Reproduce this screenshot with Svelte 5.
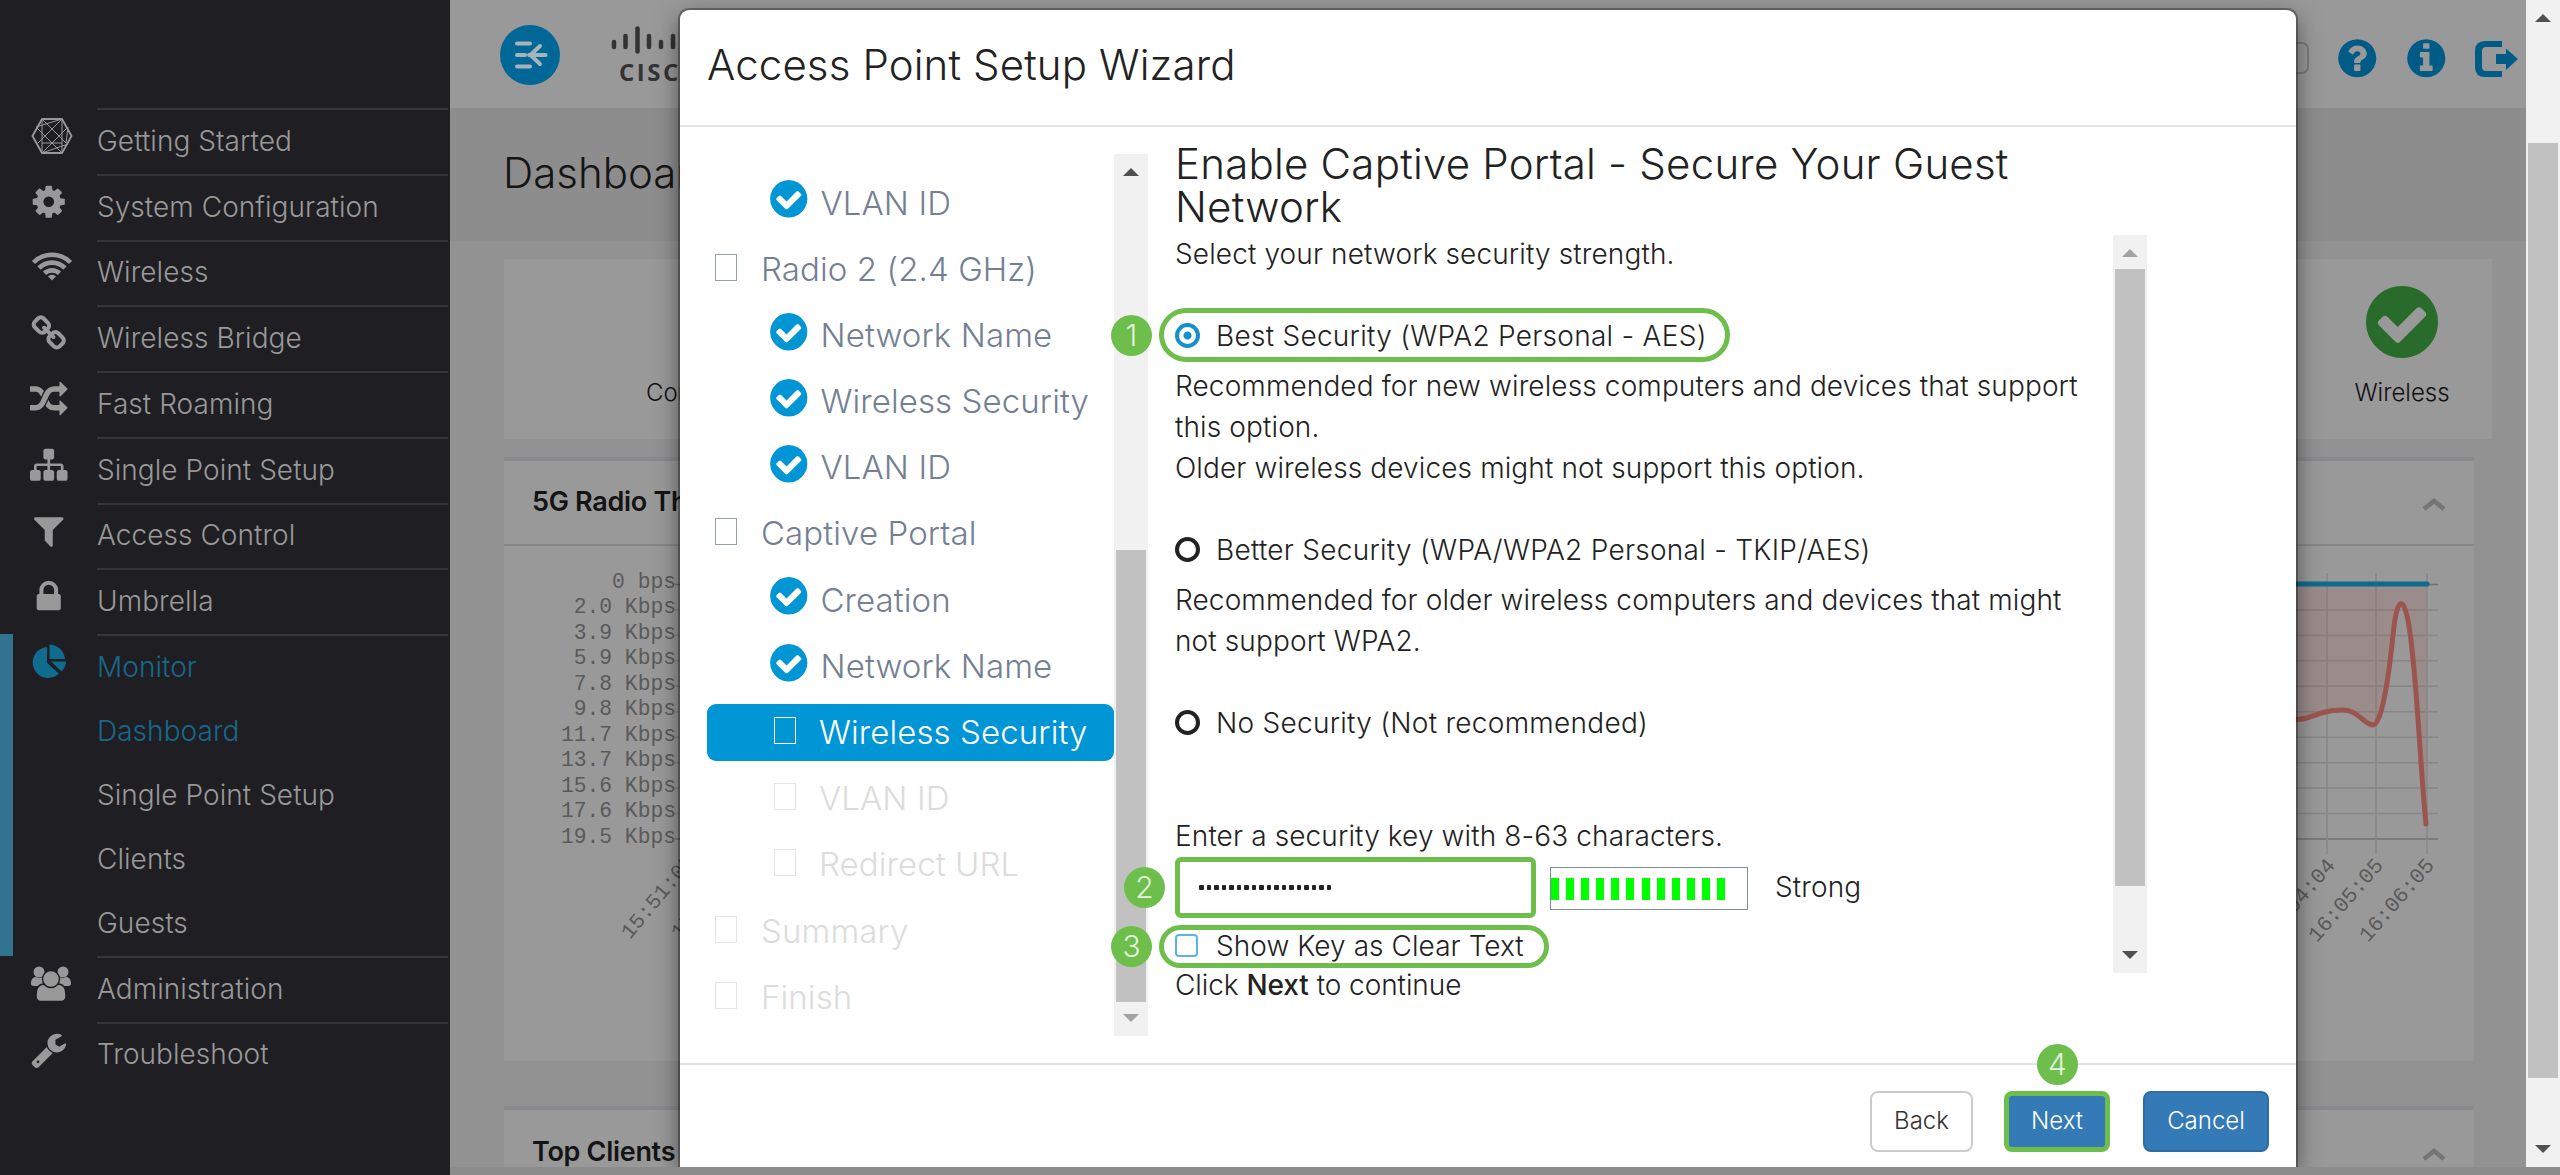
<script lang="ts">
	interface MenuItem {
		label: string;
		icon: string;
		children?: string[];
	}

	interface Step {
		label: string;
		state: 'done' | 'section' | 'active' | 'pending';
		nested: boolean;
	}

	const menu: MenuItem[] = [
		{ label: 'Getting Started', icon: 'mesh' },
		{ label: 'System Configuration', icon: 'cog' },
		{ label: 'Wireless', icon: 'wifi' },
		{ label: 'Wireless Bridge', icon: 'link' },
		{ label: 'Fast Roaming', icon: 'random' },
		{ label: 'Single Point Setup', icon: 'sitemap' },
		{ label: 'Access Control', icon: 'filter' },
		{ label: 'Umbrella', icon: 'lock' },
		{ label: 'Monitor', icon: 'pie', children: ['Dashboard', 'Single Point Setup', 'Clients', 'Guests'] },
		{ label: 'Administration', icon: 'users' },
		{ label: 'Troubleshoot', icon: 'wrench' }
	];

	const steps: Step[] = [
		{ label: 'VLAN ID', state: 'done', nested: true },
		{ label: 'Radio 2 (2.4 GHz)', state: 'section', nested: false },
		{ label: 'Network Name', state: 'done', nested: true },
		{ label: 'Wireless Security', state: 'done', nested: true },
		{ label: 'VLAN ID', state: 'done', nested: true },
		{ label: 'Captive Portal', state: 'section', nested: false },
		{ label: 'Creation', state: 'done', nested: true },
		{ label: 'Network Name', state: 'done', nested: true },
		{ label: 'Wireless Security', state: 'active', nested: true },
		{ label: 'VLAN ID', state: 'pending', nested: true },
		{ label: 'Redirect URL', state: 'pending', nested: true },
		{ label: 'Summary', state: 'pending', nested: false },
		{ label: 'Finish', state: 'pending', nested: false }
	];

	// 1792 x 1792 glyphs
	const glyphs: Record<string, string> = {
		cog: 'M1152 896q0-106-75-181t-181-75-181 75-75 181 75 181 181 75 181-75 75-181zm512-109v222q0 12-8 23t-20 13l-185 28q-19 54-39 91 35 50 107 138 10 12 10 25t-9 23q-27 37-99 108t-94 71q-12 0-26-9l-138-108q-44 23-91 38-16 136-29 186-7 28-36 28h-222q-14 0-24.5-8.5t-11.5-21.5l-28-184q-49-16-90-37l-141 107q-10 9-25 9-14 0-25-11-126-114-165-168-7-10-7-23 0-12 8-23 15-21 51-66.5t54-70.5q-27-50-41-99l-183-27q-13-2-21-12.5t-8-23.5v-222q0-12 8-23t19-13l186-28q14-46 39-92-40-57-107-138-10-12-10-24 0-10 9-23 26-36 98.5-107.5t94.5-71.5q13 0 26 10l138 107q44-23 91-38 16-136 29-186 7-28 36-28h222q14 0 24.5 8.5t11.5 21.5l28 184q49 16 90 37l142-107q9-9 24-9 13 0 25 10 129 119 165 170 7 8 7 22 0 12-8 23-15 21-51 66.5t-54 70.5q26 50 41 98l183 28q13 2 21 12.5t8 23.5z',
		link: 'M1520 1216q0-40-28-68l-208-208q-28-28-68-28-42 0-72 32 3 3 19 18.5t21.5 21.5 15 19 13 25.5 3.5 27.5q0 40-28 68t-68 28q-15 0-27.5-3.5t-25.5-13-19-15-21.5-21.5-18.5-19q-33 31-33 73 0 40 28 68l206 207q27 27 68 27 40 0 68-26l147-146q28-28 28-67zm-703-705q0-40-28-68l-206-207q-28-28-68-28-39 0-68 27l-147 146q-28 28-28 67 0 40 28 68l208 208q27 27 68 27 42 0 72-31-3-3-19-18.5t-21.5-21.5-15-19-13-25.5-3.5-27.5q0-40 28-68t68-28q15 0 27.5 3.5t25.5 13 19 15 21.5 21.5 18.5 19q33-31 33-73zm895 705q0 120-85 203l-147 146q-83 83-203 83-121 0-204-85l-206-207q-83-83-83-203 0-123 88-209l-88-88q-86 88-208 88-120 0-204-84l-208-208q-84-84-84-204t85-203l147-146q83-83 203-83 121 0 204 85l206 207q83 83 83 203 0 123-88 209l88 88q86-88 208-88 120 0 204 84l208 208q84 84 84 204z',
		random: 'M666 481q-60 92-137 273-22-45-37-72.5t-40.5-63.5-51-56.5-63-35-81.5-14.5h-224q-14 0-23-9t-9-23v-192q0-14 9-23t23-9h224q250 0 410 225zm1126 799q0 14-9 23l-320 320q-9 9-23 9-13 0-22.5-9.5t-9.5-22.5v-192q-32 0-85 .5t-81 1-73-1-71-5-64-10.5-63-18.5-58-28.5-59-40-55-53.5-56-69.5q59-93 136-273 22 45 37 72.5t40.5 63.5 51 56.5 63 35 81.5 14.5h256v-192q0-14 9-23t23-9q12 0 24 10l319 319q9 9 9 23zm0-896q0 14-9 23l-320 320q-9 9-23 9-13 0-22.5-9.5t-9.5-22.5v-192h-256q-48 0-87 15t-69 45-51 61.5-45 77.5q-32 62-78 171-29 66-49.5 111t-54 105-64 100-74 83-90 68.5-106.5 42-128 16.5h-224q-14 0-23-9t-9-23v-192q0-14 9-23t23-9h224q48 0 87-15t69-45 51-61.5 45-77.5q32-62 78-171 29-66 49.5-111t54-105 64-100 74-83 90-68.5 106.5-42 128-16.5h256v-192q0-14 9-23t23-9q12 0 24 10l319 319q9 9 9 23z',
		sitemap: 'M1792 1248v320q0 40-28 68t-68 28h-320q-40 0-68-28t-28-68v-320q0-40 28-68t68-28h96v-192h-512v192h96q40 0 68 28t28 68v320q0 40-28 68t-68 28h-320q-40 0-68-28t-28-68v-320q0-40 28-68t68-28h96v-192h-512v192h96q40 0 68 28t28 68v320q0 40-28 68t-68 28h-320q-40 0-68-28t-28-68v-320q0-40 28-68t68-28h96v-192q0-52 38-90t90-38h512v-192h-96q-40 0-68-28t-28-68v-320q0-40 28-68t68-28h320q40 0 68 28t28 68v320q0 40-28 68t-68 28h-96v192h512q52 0 90 38t38 90v192h96q40 0 68 28t28 68z',
		filter: 'M1595 295q17 41-14 70l-493 493v742q0 42-39 59-13 5-25 5-27 0-45-19l-256-256q-19-19-19-45v-486l-493-493q-31-29-14-70 17-39 59-39h1280q42 0 59 39z',
		lock: 'M640 768h512v-192q0-106-75-181t-181-75-181 75-75 181v192zm832 96v576q0 40-28 68t-68 28h-960q-40 0-68-28t-28-68v-576q0-40 28-68t68-28h32v-192q0-184 132-316t316-132 316 132 132 316v192h32q40 0 68 28t28 68z',
		wrench: 'M448 1472q0-26-19-45t-45-19-45 19-19 45 19 45 45 19 45-19 19-45zm644-420l-682 682q-37 37-90 37-52 0-91-37l-106-108q-38-36-38-90 0-53 38-91l681-681q39 98 114.5 173.5t173.5 114.5zm634-435q0 39-23 106-47 134-164.5 217.5t-258.5 83.5q-185 0-316.5-131.5t-131.5-316.5 131.5-316.5 316.5-131.5q58 0 121.5 16.5t107.5 46.5q16 11 16 28t-16 28l-293 169v224l193 107q5-3 79-48.5t135.5-81 70.5-35.5q15 0 23.5 10t8.5 25z'
	};

	const disc = 'zm384 192q0 209-103 385.5t-279.5 279.5-385.5 103-385.5-103-279.5-279.5-103-385.5 103-385.5 279.5-279.5 385.5-103 385.5 103 279.5 279.5 103 385.5z';
	const question =
		'M1024 1376v-192q0-14-9-23t-23-9h-192q-14 0-23 9t-9 23v192q0 14 9 23t23 9h192q14 0 23-9t9-23zm256-672q0-88-55.5-163t-138.5-116-170-41q-243 0-371 213-15 24 8 42l132 100q7 6 19 6 16 0 25-12 53-68 86-92 34-24 86-24 48 0 85.5 26t37.5 59q0 38-20 61t-68 45q-63 28-115.5 86.5t-52.5 125.5v36q0 14 9 23t23 9h192q14 0 23-9t9-23q0-19 21.5-49.5t54.5-49.5q32-18 49-28.5t46-35 44.5-48 28-60.5 12.5-81' +
		disc;
	const info =
		'M1152 1376v-160q0-14-9-23t-23-9h-96v-512q0-14-9-23t-23-9h-320q-14 0-23 9t-9 23v160q0 14 9 23t23 9h96v320h-96q-14 0-23 9t-9 23v160q0 14 9 23t23 9h448q14 0 23-9t9-23zm-128-896v-160q0-14-9-23t-23-9h-192q-14 0-23 9t-9 23v160q0 14 9 23t23 9h192q14 0 23-9t9-23zm640 416q0 209-103 385.5t-279.5 279.5-385.5 103-385.5-103-279.5-279.5-103-385.5 103-385.5 279.5-279.5 385.5-103 385.5 103 279.5 279.5 103 385.5z';
	const check =
		'M1412 734q0-28-18-46l-91-90q-19-19-45-19t-45 19l-408 407-226-226q-19-19-45-19t-45 19l-91 90q-18 18-18 46 0 27 18 45l362 362q19 19 45 19 27 0 46-19l543-543q18-18 18-45zm252 162q0 209-103 385.5t-279.5 279.5-385.5 103-385.5-103-279.5-279.5-103-385.5 103-385.5 279.5-279.5 385.5-103 385.5 103 279.5 279.5 103 385.5z';

	const rates = ['0 bps', '2.0 Kbps', '3.9 Kbps', '5.9 Kbps', '7.8 Kbps', '9.8 Kbps', '11.7 Kbps', '13.7 Kbps', '15.6 Kbps', '17.6 Kbps', '19.5 Kbps'];
	const gridY = rates.map((_, i) => 38.5 + i * 25.45);
	const bars = Array.from({ length: 12 });

	let strength = $state('best');
	let key = $state('guest-network-pass');
	let showKey = $state(false);
</script>

{#snippet scrollArrow(down: boolean, muted: boolean)}
	<svg class="arrow" class:muted width="16" height="8" viewBox="0 0 16 8">
		<path d={down ? 'M0 0h16L8 8z' : 'M0 8h16L8 0z'} />
	</svg>
{/snippet}

{#snippet menuIcon(name: string)}
	{#if name === 'mesh'}
		<svg class="icon mesh" width="42" height="38" viewBox="0 0 42 38">
			<path class="outline" d="M11 2h20l9.500 17L31 36H11L1.500 19z" />
			<path d="M11 2v34M31 2v34M11 26h20M11 2l24 24M31 2L7 26M11 36L37 10M31 36L5 10M5 10L31 2M11 36l26-9M37 10l-2 16" />
		</svg>
	{:else if name === 'wifi'}
		<svg class="icon wifi" width="42" height="30" viewBox="0 0 42 30">
			<path d="M2.500 11.500a26 26 0 0 1 37 0M8 17a18.500 18.500 0 0 1 26 0M13.500 22.300a11 11 0 0 1 15 0" />
			<path class="dot" d="M17 25.200a6 6 0 0 1 8 0L21 29.500z" />
		</svg>
	{:else if name === 'pie'}
		<svg class="icon" width="37" height="36" viewBox="0 0 37 36">
			<path d="M16 3v16l12 10.500A15.500 15.500 0 1 1 16 3z" />
			<path d="M18.500 .5A16 16 0 0 1 34 15H18.500zM20 17.500h15a15 15 0 0 1-4.500 10z" />
		</svg>
	{:else if name === 'users'}
		<svg class="icon users" width="42" height="36" viewBox="0 0 42 36">
			<circle cx="9" cy="6" r="5.500" />
			<circle cx="33" cy="6" r="5.500" />
			<path d="M1 18c0-5 2-7 5-7 2 1.500 5 1.500 6 0l2 9H4c-2 0-3-1-3-2zM41 18c0-5-2-7-5-7-2 1.500-5 1.500-6 0l-2 9h10c2 0 3-1 3-2z" />
			<path class="cut" d="M6 30c0-8 3-12 8-12 4 4 10 4 14 0 5 0 8 4 8 12 0 3-2 5.500-5 5.500H11c-3 0-5-2.500-5-5.500z" />
			<circle class="cut" cx="21" cy="13" r="8.500" />
		</svg>
	{:else}
		<svg class="icon" width="37.500" height="37.500" viewBox="0 0 1792 1792"><path d={glyphs[name]} /></svg>
	{/if}
{/snippet}

<div class="app">
	<aside class="sidebar">
		<ul>
			{#each menu as item (item.label)}
				<li class:current={item.children}>
					<div class="menu-row">
						<span class="menu-icon">{@render menuIcon(item.icon)}</span>
						<span class="menu-label">{item.label}</span>
					</div>
					{#if item.children}
						{#each item.children as child, i (child)}
							<div class="sub-row" class:selected={i === 0}>{child}</div>
						{/each}
					{/if}
				</li>
			{/each}
		</ul>
	</aside>

	<main class="page">
		<header class="topbar">
			<svg class="toggle" width="60" height="60" viewBox="0 0 60 60">
				<circle cx="30" cy="30" r="30" />
				<path d="M17 18.500h13M17 30h8M17 41.500h13M29 30h16.500M40 21l-9.500 9 9.500 9" />
			</svg>
			<div class="brand">
				<svg width="110" height="28" viewBox="0 0 110 28">
					<path d="M3 16v5M14.500 10v11M26.500 2.500v23M38 10v11M50 16v5M62 10v11M74 2.500v23M86 10v11M98 16v5" />
				</svg>
				<span>CISCO</span>
			</div>
			<div class="language"></div>
			<svg class="tool" width="44.500" height="44.500" viewBox="0 0 1792 1792"><path d={question} /></svg>
			<svg class="tool second" width="44.500" height="44.500" viewBox="0 0 1792 1792"><path d={info} /></svg>
			<svg class="tool logout" width="43" height="38" viewBox="0 0 43 38">
				<path d="M27 1v6H11q-4 0-4 4v16q0 4 4 4h16v6H10Q0 37 0 27V11Q0 1 10 1z" />
				<path d="M21 14h10V8.500L43 19 31 30v-6H21z" />
			</svg>
		</header>

		<h1>Dashboard</h1>

		<section class="status">
			<span class="status-item first">Connectivity</span>
			<div class="status-item last">
				<svg width="84" height="84" viewBox="0 0 1792 1792"><path d={check} /></svg>
				<span>Wireless</span>
			</div>
		</section>

		<section class="panel throughput">
			<div class="panel-head">
				<span>5G Radio Throughput</span>
				<svg width="24" height="13" viewBox="0 0 24 13"><path d="M2 11l10-8 10 8" /></svg>
			</div>
			<div class="panel-body">
				<ul class="rates">
					{#each rates as rate}
						<li>{rate}</li>
					{/each}
				</ul>
				<svg class="chart" width="1762" height="515" viewBox="0 0 1762 515">
					{#each gridY as y, i}
						<path class="grid" class:axis={i === 0 || i === 10} d="M-1 {y}H1762" />
					{/each}
					<path class="grid" d="M1651 27V308M1700 27V308M1751 27V308" />
					<path class="fill" d="M1497 38V171H1621C1631 176 1645 165 1665 164C1682 163 1687 179 1697 179C1705 179 1712 140 1718 80C1722 50 1728 50 1733 80C1741 130 1744 220 1750 278V38z" />
					<path class="traffic" d="M1597 168C1617 172 1621 175 1631 172C1642 168 1652 164 1665 164C1683 163 1687 179 1697 179C1705 179 1712 140 1718 80C1722 50 1728 50 1733 80C1741 130 1744 220 1750 278" />
					<path class="flat" d="M20 38H1751" />
					<text transform="translate(-46 394) rotate(-50)">15:51:05</text>
					<text transform="translate(4 394) rotate(-50)">15:52:05</text>
					<text transform="translate(1593 397) rotate(-49)">16:04:04</text>
					<text transform="translate(1641 397) rotate(-49)">16:05:05</text>
					<text transform="translate(1692 397) rotate(-49)">16:06:05</text>
				</svg>
			</div>
		</section>

		<section class="panel clients">
			<div class="panel-head">
				<span>Top Clients</span>
				<svg width="24" height="13" viewBox="0 0 24 13"><path d="M2 11l10-8 10 8" /></svg>
			</div>
		</section>
	</main>

	<div class="scrollbar page-scroll">
		{@render scrollArrow(false, false)}
		<div class="thumb"></div>
		{@render scrollArrow(true, false)}
	</div>
	<div class="bottom-edge"></div>

	<div class="modal" role="dialog" aria-label="Access Point Setup Wizard">
		<header class="modal-head">Access Point Setup Wizard</header>

		<div class="modal-body">
			<nav class="steps">
				{#each steps as step}
					<div class="step {step.state}" class:nested={step.nested}>
						{#if step.state === 'done'}
							<svg class="tick" width="43.500" height="43.500" viewBox="0 0 1792 1792"><path d={check} /></svg>
						{:else}
							<span class="box"></span>
						{/if}
						<span>{step.label}</span>
					</div>
				{/each}
			</nav>
			<div class="scrollbar steps-scroll">
				{@render scrollArrow(false, false)}
				<div class="thumb"></div>
				{@render scrollArrow(true, true)}
			</div>

			<div class="content">
				<h2>Enable Captive Portal - Secure Your Guest<br />Network</h2>
				<div class="content-scroll">
					<form class="security">
						<p>Select your network security strength.</p>

						<label class="option spaced">
							<input type="radio" bind:group={strength} value="best" />
							<span>Best Security (WPA2 Personal - AES)</span>
						</label>
						<p>
							Recommended for new wireless computers and devices that support<br />this option.<br />
							Older wireless devices might not support this option.
						</p>

						<label class="option spaced">
							<input type="radio" bind:group={strength} value="better" />
							<span>Better Security (WPA/WPA2 Personal - TKIP/AES)</span>
						</label>
						<p>Recommended for older wireless computers and devices that might<br />not support WPA2.</p>

						<label class="option spaced">
							<input type="radio" bind:group={strength} value="none" />
							<span>No Security (Not recommended)</span>
						</label>

						<p class="key-hint">Enter a security key with 8-63 characters.</p>
						<div class="key-row">
							<div class="key-input">
								{#each key.split('') as _}
									<i></i>
								{/each}
							</div>
							<div class="meter">
								{#each bars as _}
									<i></i>
								{/each}
							</div>
							<span>Strong</span>
						</div>
						<label class="option show-key">
							<input type="checkbox" bind:checked={showKey} />
							<span>Show Key as Clear Text</span>
						</label>
						<p class="hint">Click <b>Next</b> to continue</p>
					</form>
					<div class="scrollbar content-bar">
						{@render scrollArrow(false, true)}
						<div class="thumb"></div>
						{@render scrollArrow(true, false)}
					</div>
				</div>
			</div>
		</div>

		<footer class="modal-foot">
			<button class="plain">Back</button>
			<button class="primary next">Next</button>
			<button class="primary">Cancel</button>
		</footer>

		<!-- tutorial callouts -->
		<div class="ring ring-best"></div>
		<div class="ring ring-show"></div>
		<span class="badge b1">1</span>
		<span class="badge b2">2</span>
		<span class="badge b3">3</span>
		<span class="badge b4">4</span>
	</div>
</div>

<style>
	:global(body) {
		background: #8c8c8c;
	}

	.app {
		position: relative;
		display: grid;
		grid-template-columns: 450px 2076px 34px;
		grid-template-rows: 1167px 8px;
		width: 2560px;
		height: 1175px;
		overflow: hidden;
		font-family: Inter, 'Liberation Sans', sans-serif;
		font-weight: 350;
		color: #222;
	}

	ul {
		list-style: none;
		margin: 0;
		padding: 0;
	}

	p,
	h1,
	h2 {
		margin: 0;
		font-weight: inherit;
	}

	/* sidebar */
	.sidebar {
		grid-row: 1 / 3;
		background: #1f1e22;
		padding: 108px 2px 0 0;
		font-size: 28px;
		letter-spacing: 0.05px;
		color: #999;
	}

	.menu-row {
		display: grid;
		grid-template-columns: 97px 1fr;
		height: 65.75px;
	}

	.menu-icon {
		display: flex;
		align-items: center;
		justify-content: center;
		padding: 0 0 9px 1px;
	}

	.icon {
		fill: #999;
		overflow: visible;
	}

	.mesh {
		margin-left: 5px;
		fill: none;
		stroke: #999;
		stroke-width: 1;
	}

	.mesh .outline {
		stroke-width: 1.8;
	}

	.wifi {
		margin: 0 0 4px 5px;
		fill: none;
		stroke: #999;
		stroke-width: 4.6;
	}

	.wifi .dot {
		fill: #999;
		stroke: none;
	}

	.users {
		margin-left: 3px;
	}

	.users .cut {
		stroke: #1f1e22;
		stroke-width: 1.4;
	}

	.menu-label {
		display: flex;
		align-items: center;
		padding-bottom: 2px;
		border-top: 2px solid #36363a;
	}

	.sub-row {
		display: flex;
		align-items: center;
		height: 64px;
		padding: 0 0 2px 97px;
		box-sizing: border-box;
	}

	.current {
		box-shadow: inset 13px 0 #32738f;
	}

	.current .menu-label,
	.sub-row.selected {
		color: #17688b;
	}

	.current .icon {
		fill: #0f6c8e;
	}

	/* dimmed page */
	.page {
		display: flex;
		flex-direction: column;
		background: #929292;
		overflow: hidden;
	}

	.topbar {
		display: flex;
		align-items: flex-start;
		flex: 0 0 108px;
		padding: 25px 8px 0 50px;
		background: #999;
		box-sizing: border-box;
	}

	.toggle {
		fill: #006797;
	}

	.toggle path {
		fill: none;
		stroke: #a6b4bb;
		stroke-width: 4;
		stroke-linecap: round;
	}

	.brand {
		display: flex;
		flex-direction: column;
		margin: 1px 0 0 51px;
		font: 700 24px/24px 'Open Sans', sans-serif;
		letter-spacing: 2.5px;
		color: #333;
	}

	.brand svg {
		fill: none;
		stroke: #333;
		stroke-width: 4.5;
		stroke-linecap: round;
	}

	.brand span {
		padding: 6px 0 0 8px;
	}

	.language {
		width: 60px;
		height: 32px;
		margin: 17px 26px 0 auto;
		border: 2px solid #7b7b7b;
		border-radius: 7px;
		box-sizing: border-box;
	}

	.tool {
		fill: #005c86;
		margin-top: 11px;
	}

	.tool.second {
		margin-left: 24.5px;
	}

	.tool.logout {
		margin: 15px 0 0 26.5px;
	}

	h1 {
		flex: 0 0 133px;
		padding: 39px 0 0 53px;
		font-size: 42px;
		line-height: 51px;
		color: #151515;
		background: #8d8d8d;
		box-sizing: border-box;
	}

	.status {
		display: flex;
		justify-content: space-between;
		flex: 0 0 180px;
		margin: 18px 34px 0 54px;
		background: #999;
		font-size: 24px;
		line-height: 29px;
		color: #111;
	}

	.status-item.first {
		padding: 119px 0 0 142px;
	}

	.status-item.last {
		display: flex;
		flex-direction: column;
		align-items: center;
		width: 180px;
		padding-top: 21px;
	}

	.status-item svg {
		fill: #286b2b;
		margin-bottom: 14px;
	}

	.panel {
		margin: 18px 52px 0 54px;
		border-top: 4px solid #898a8d;
		background: #999;
		box-sizing: border-box;
	}

	.throughput {
		flex: 0 0 603px;
	}

	.clients {
		flex: 0 0 100px;
		margin-top: 45px;
	}

	.panel-head {
		display: flex;
		align-items: center;
		justify-content: space-between;
		height: 85px;
		padding: 0 28px 2px;
		border-bottom: 2px solid #878787;
		box-sizing: border-box;
		font-size: 27px;
		font-weight: 600;
		letter-spacing: -0.3px;
		color: #141414;
	}

	.clients .panel-head {
		padding-bottom: 1px;
	}

	.panel-head svg {
		margin-top: 6px;
		fill: none;
		stroke: #757575;
		stroke-width: 4.5;
	}

	.panel-body {
		display: flex;
	}

	.rates {
		width: 172px;
		padding-top: 24px;
		font: 21.3px/25.45px 'Liberation Mono', monospace;
		color: #5a5a5a;
		text-align: right;
	}

	.chart {
		fill: none;
		overflow: visible;
	}

	.chart text {
		font: 21.3px 'Liberation Mono', monospace;
		fill: #5a5a5a;
	}

	.grid {
		stroke: #868686;
		stroke-width: 1.5;
	}

	.grid.axis {
		stroke: #707070;
	}

	.fill {
		fill: #9d4f48;
		fill-opacity: 0.17;
	}

	.traffic {
		stroke: #9c554e;
		stroke-width: 5;
		stroke-linecap: round;
	}

	.flat {
		stroke: #0f6b8c;
		stroke-width: 5;
		stroke-linecap: round;
	}

	/* scrollbars */
	.scrollbar {
		display: flex;
		flex-direction: column;
		align-items: center;
		flex: 0 0 34px;
		background: #f1f1f1;
		box-sizing: border-box;
	}

	.thumb {
		width: 30px;
		background: #c1c1c1;
	}

	.arrow {
		fill: #505050;
		flex-shrink: 0;
	}

	.arrow.muted {
		fill: #a3a3a3;
	}

	.arrow:last-child {
		margin-top: auto;
	}

	.page-scroll {
		padding: 14px 0;
	}

	.page-scroll .thumb {
		height: 935px;
		margin-top: 121px;
	}

	.bottom-edge {
		grid-column: 2 / 4;
		background: #8c8c8c;
	}

	/* wizard */
	.modal {
		position: absolute;
		left: 680px;
		top: 10px;
		display: flex;
		flex-direction: column;
		width: 1616px;
		height: 1157px;
		background: #fff;
		border-radius: 9px 9px 0 0;
		box-shadow: 0 0 0 2px rgba(0, 0, 0, 0.3), 0 8px 25px rgba(0, 0, 0, 0.5);
		clip-path: inset(-10px -50px 0 -50px);
	}

	.modal-head {
		flex: 0 0 117px;
		padding: 29px 27px 0;
		border-bottom: 2px solid #e3e3e3;
		box-sizing: border-box;
		font-size: 42px;
		line-height: 51px;
		letter-spacing: 0.12px;
	}

	.modal-body {
		display: flex;
		height: 936px;
	}

	.steps {
		width: 407px;
		padding: 47px 0 0 27px;
		font-size: 33px;
		letter-spacing: 0.1px;
	}

	.step {
		display: flex;
		align-items: center;
		height: 57px;
		margin-bottom: 9.2px;
		padding-left: 8px;
		border-radius: 9px;
		box-sizing: border-box;
		color: #748092;
		white-space: nowrap;
	}

	.step.nested {
		padding-left: 67px;
	}

	.tick {
		flex-shrink: 0;
		margin: -7px 10px 0 -7px;
		fill: #0096d6;
	}

	.box {
		width: 22px;
		height: 27px;
		margin: 0 24px 3px 0;
		border: 1px solid currentColor;
		box-sizing: border-box;
		opacity: 0.75;
	}

	.nested .box {
		margin-right: 23px;
	}

	.step.active {
		background: #0096d6;
		color: #fff;
	}

	.active .box {
		opacity: 1;
	}

	.step.pending {
		color: #dcdcdc;
	}

	.steps-scroll {
		height: 882px;
		margin-top: 27px;
		padding: 14px 0;
	}

	.steps-scroll .thumb {
		height: 452px;
		margin-top: 374px;
	}

	.content {
		display: flex;
		flex-direction: column;
		width: 972px;
		padding: 16px 0 0 27px;
	}

	h2 {
		height: 91px;
		font-size: 42px;
		line-height: 42.7px;
		letter-spacing: 0.22px;
		white-space: nowrap;
	}

	.content-scroll {
		display: flex;
		height: 740px;
	}

	.security {
		flex: 1;
		font-size: 28px;
		line-height: 41px;
		letter-spacing: 0.12px;
		white-space: nowrap;
	}

	.option {
		display: flex;
		height: 50px;
		letter-spacing: 0.27px;
	}

	.option.spaced {
		margin-top: 41px;
	}

	.option input {
		appearance: none;
		width: 25px;
		height: 25px;
		margin: 7px 16px 0 0;
		border: 4px solid #222;
		border-radius: 50%;
		box-sizing: border-box;
	}

	.option input:checked {
		border-color: #1390cd;
		background: radial-gradient(circle, #1390cd 3.5px, #fff 4.5px);
	}

	.key-hint {
		margin-top: 63px;
	}

	.key-row {
		display: flex;
		align-items: center;
		height: 61px;
	}

	.key-input {
		display: flex;
		align-items: center;
		gap: 3px;
		width: 361px;
		height: 61px;
		padding: 0 0 0 19px;
		border: 5px solid #6dbe4b;
		border-radius: 6px;
		box-sizing: border-box;
	}

	.key-input i {
		width: 4.500px;
		height: 4.500px;
		border-radius: 1px;
		background: #222;
	}

	.meter {
		display: flex;
		align-items: center;
		gap: 7.1px;
		width: 198px;
		height: 43px;
		margin: 2px 27px 0 14px;
		border: 1px solid #7c8e99;
		box-sizing: border-box;
	}

	.meter i {
		width: 8px;
		height: 22px;
		background: #0f0;
	}

	.show-key {
		height: 39px;
		margin-top: 8px;
		letter-spacing: 0.06px;
	}

	.show-key input {
		width: 23px;
		height: 23px;
		margin: 8px 18px 0 0;
		border: 2px solid #5bb5e0;
		border-radius: 4px;
	}

	.hint {
		letter-spacing: -0.06px;
	}

	.hint b {
		font-weight: 500;
	}

	.content-bar {
		height: 738px;
		margin-top: 1px;
		padding: 14px 0;
	}

	.content-bar .thumb {
		height: 617px;
		margin-top: 12px;
	}

	.modal-foot {
		display: flex;
		justify-content: flex-end;
		align-items: flex-start;
		flex: 1;
		padding: 26px 27px 0 0;
		border-top: 2px solid #e3e3e3;
		box-sizing: border-box;
	}

	button {
		width: 126px;
		height: 61px;
		border: 2px solid #2e6da4;
		border-radius: 8px;
		font: inherit;
		font-size: 24px;
		padding: 0 0 3px;
	}

	.primary {
		background: #337ab7;
		color: #fff;
	}

	.plain {
		width: 103px;
		background: #fff;
		border-color: #ccc;
		color: #333;
	}

	.next {
		width: 106px;
		margin: 0 33px 0 31px;
		border: 5px solid #6dbe4b;
	}

	.ring {
		position: absolute;
		left: 479px;
		border: 5px solid #6dbe4b;
		border-radius: 28px;
		box-sizing: border-box;
	}

	.ring-best {
		top: 298px;
		width: 571px;
		height: 54px;
	}

	.ring-show {
		top: 915px;
		width: 390px;
		height: 43px;
	}

	.badge {
		position: absolute;
		width: 41px;
		height: 41px;
		border-radius: 50%;
		background: #6dbe4b;
		color: #e6f3df;
		font-size: 30px;
		line-height: 41px;
		text-align: center;
	}

	.b1 {
		left: 431px;
		top: 305px;
	}

	.b2 {
		left: 444px;
		top: 857px;
	}

	.b3 {
		left: 431px;
		top: 916px;
	}

	.b4 {
		left: 1357px;
		top: 1034px;
	}
</style>
